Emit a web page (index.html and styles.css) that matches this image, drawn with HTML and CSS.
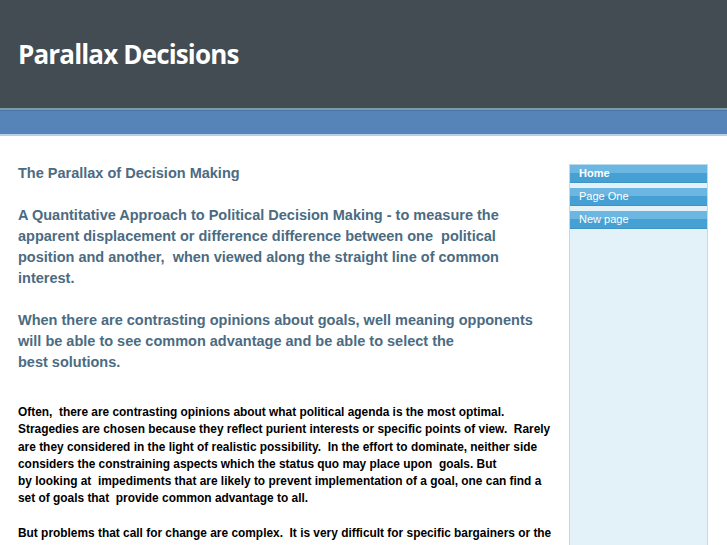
FILE: index.html
```html
<!DOCTYPE html>
<html lang="en">
<head>
<meta charset="utf-8">
<title>Parallax Decisions</title>
<link rel="stylesheet" href="styles.css">
</head>
<body>
<header class="masthead">
  <h1 class="site-title">Parallax Decisions</h1>
</header>
<div class="bluebar"></div>
<div class="page">
  <main class="content">
    <p class="lead">The Parallax of Decision Making</p>
    <p class="lead">A Quantitative Approach to Political Decision Making - to measure the<br>apparent displacement or difference difference between one &nbsp;political<br>position and another, &nbsp;when viewed along the straight line of common<br>interest.</p>
    <p class="lead">When there are contrasting opinions about goals, well meaning opponents<br>will be able to see common advantage and be able to select the<br>best solutions.</p>
    <p class="body">Often, &nbsp;there are contrasting opinions about what political agenda is the most optimal.<br>Stragedies are chosen because they reflect purient interests or specific points of view. &nbsp;Rarely<br>are they considered in the light of realistic possibility. &nbsp;In the effort to dominate, neither side<br>considers the constraining aspects which the status quo may place upon &nbsp;goals. But<br>by looking at &nbsp;impediments that are likely to prevent implementation of a goal, one can find a<br>set of goals that &nbsp;provide common advantage to all.</p>
    <p class="body">But problems that call for change are complex. &nbsp;It is very difficult for specific bargainers or the<br>competing interests to agree on what is possible, let alone what is most beneficial to all.</p>
  </main>
  <aside class="sidebar">
    <nav class="menu">
      <a class="menu-item active" href="#">Home</a>
      <a class="menu-item" href="#">Page One</a>
      <a class="menu-item" href="#">New page</a>
    </nav>
  </aside>
</div>
</body>
</html>
```
FILE: styles.css
```css
html, body {
  margin: 0;
  padding: 0;
  height: 100%;
  overflow: hidden;
  background: #ffffff;
}

body {
  font-family: "Liberation Sans", Arial, sans-serif;
}

.masthead {
  height: 110px;
  background: #434c53;
  border-bottom: 2px solid #7f9aa6;
  display: flex;
  align-items: center;
  padding-left: 18px;
  box-sizing: border-box;
}

.site-title {
  margin: 0;
  font-family: "Open Sans", "DejaVu Sans", sans-serif;
  font-weight: 700;
  font-size: 26px;
  letter-spacing: -0.85px;
  color: #ffffff;
}

.bluebar {
  height: 23px;
  background: #5784b8;
  border-top: 1px solid #4a77aa;
  border-bottom: 2px solid #b3d2e6;
}

.page {
  display: flex;
  align-items: stretch;
  height: 100%;
}

.content {
  width: 537px;
  padding: 27px 0 0 18px;
  box-sizing: content-box;
}

.lead {
  margin: 0 0 21px;
  font-size: 14.5px;
  line-height: 21px;
  font-weight: 700;
  color: #4b6b82;
  white-space: nowrap;
}

.body {
  margin: 31px 0 17px;
  font-size: 11.9px;
  line-height: 17.3px;
  font-weight: 700;
  color: #000000;
  white-space: nowrap;
}

.body + .body {
  margin-top: 0;
}

.sidebar {
  margin: 28px 0 0 14px;
  width: 137px;
  background: #e3f1f9;
  border: 1px solid #bcdcee;
  border-bottom: none;
}

.menu {
  display: flex;
  flex-direction: column;
  gap: 5px;
}

.menu-item {
  display: block;
  height: 18px;
  line-height: 16px;
  padding-left: 9px;
  font-size: 11px;
  color: #ffffff;
  text-decoration: none;
  background: linear-gradient(#6bb7e2 0, #6bb7e2 8px, #47a0d4 8px, #47a0d4 100%);
  border-bottom: 1px solid #3f93c6;
  box-sizing: border-box;
}

.menu-item.active {
  font-weight: 700;
}
```
